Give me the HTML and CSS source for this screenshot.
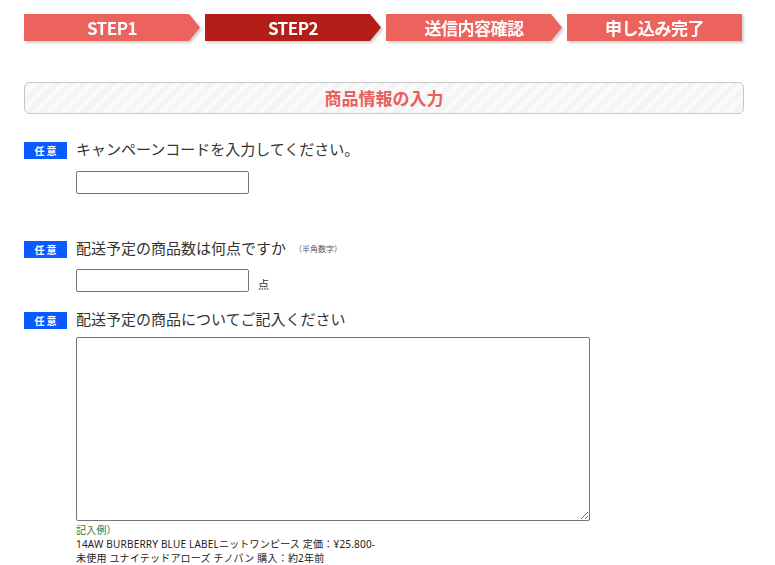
FILE: index.html
```html
<!DOCTYPE html>
<html lang="ja">
<head>
<meta charset="utf-8">
<link rel="stylesheet" href="styles.css">
</head>
<body>
<div class="page">
  <ol class="steps">
    <li class="step"><span class="step-shape">STEP1</span></li>
    <li class="step step-current"><span class="step-shape">STEP2</span></li>
    <li class="step"><span class="step-shape">送信内容確認</span></li>
    <li class="step step-last"><span class="step-shape">申し込み完了</span></li>
  </ol>

  <h2 class="section-title">商品情報の入力</h2>

  <div class="field field-first">
    <span class="badge">任意</span>
    <div class="field-body">
      <div class="label">キャンペーンコードを入力してください。</div>
      <input class="text-input" type="text">
    </div>
  </div>

  <div class="field field-second">
    <span class="badge">任意</span>
    <div class="field-body">
      <div class="label">配送予定の商品数は何点ですか<small class="note">（半角数字）</small></div>
      <div class="input-line">
        <input class="text-input" type="text"><span class="unit">点</span>
      </div>
    </div>
  </div>

  <div class="field field-third">
    <span class="badge">任意</span>
    <div class="field-body">
      <div class="label">配送予定の商品についてご記入ください</div>
      <textarea class="textarea"></textarea>
      <div class="example">
        <div class="example-head">記入例）</div>
        <div>14AW BURBERRY BLUE LABELニットワンピース 定価：¥25.800-</div>
        <div>未使用 ユナイテッドアローズ チノパン 購入：約2年前</div>
      </div>
    </div>
  </div>
</div>
</body>
</html>
```

FILE: styles.css
```css
* { box-sizing: border-box; }
html, body { margin: 0; padding: 0; background: #fff; }
body {
  font-family: "Noto Sans", "Noto Sans CJK JP", sans-serif;
  color: #333;
}
.page {
  width: 720px;
  margin-left: 24px;
  padding-top: 14px;
}

/* steps */
.steps {
  list-style: none;
  margin: 0;
  padding: 0;
  display: flex;
  gap: 5px;
  height: 30px;
}
.step {
  width: 176px;
  height: 27px;
  filter: drop-shadow(2px 2px 1px rgba(0, 0, 0, 0.18));
}
.step-last { width: 175px; }
.step-shape {
  display: flex;
  align-items: center;
  justify-content: center;
  width: 100%;
  height: 100%;
  background: #ec625c;
  color: #fff;
  font-family: "Noto Sans CJK JP", sans-serif;
  font-weight: 700;
  font-size: 17px;
  letter-spacing: -0.5px;
  line-height: 1;
  clip-path: polygon(0 0, calc(100% - 11px) 0, 100% 50%, calc(100% - 11px) 100%, 0 100%);
}
.step-current .step-shape { background: #b51e18; }
.step-last .step-shape { clip-path: none; }

/* section title */
.section-title {
  margin: 38px 0 0;
  height: 32px;
  border: 1px solid #c8c8c8;
  border-radius: 5px;
  background: repeating-linear-gradient(135deg, #f4f4f4 0 5px, #fafafa 5px 10px);
  color: #e8605b;
  font-family: "Noto Sans CJK JP", sans-serif;
  font-size: 17px;
  font-weight: 700;
  line-height: 29px;
  text-align: center;
}

/* fields */
.field {
  display: flex;
  gap: 9px;
}
.field-first { margin-top: 28px; }
.field-second { margin-top: 47px; }
.field-third { margin-top: 20px; }

.badge {
  flex: none;
  width: 43px;
  height: 17px;
  background: #0a5bff;
  color: #fff;
  font-family: "Noto Sans CJK JP", sans-serif;
  font-size: 10px;
  font-weight: 700;
  letter-spacing: 2px;
  line-height: 17px;
  text-align: center;
  padding-left: 2px;
}
.field-body { flex: 1; }
.label {
  font-family: "Noto Sans CJK JP", sans-serif;
  font-size: 15px;
  line-height: 18px;
  color: #333;
  margin-top: -2px;
}
.note {
  font-size: 8px;
  color: #555;
  margin-left: 8px;
  vertical-align: 2px;
}
.text-input {
  display: block;
  width: 173px;
  height: 23px;
  margin: 13px 0 0;
  border: 1px solid #767676;
  border-radius: 2px;
  padding: 1px 2px;
  font-size: 13px;
  background: #fff;
}
.field-second .text-input { margin-top: 0; }
.input-line {
  display: flex;
  align-items: center;
  margin-top: 11px;
}
.unit {
  font-family: "Noto Sans CJK JP", sans-serif;
  font-size: 11px;
  color: #333;
  margin-left: 9px;
  margin-top: 6px;
}
.textarea {
  display: block;
  width: 514px;
  height: 184px;
  margin: 9px 0 0;
  border: 1px solid #767676;
  border-radius: 2px;
  font-size: 13px;
  resize: both;
}
.example {
  margin-top: 2px;
  font-family: "Noto Sans", "Noto Sans CJK JP", sans-serif;
  font-size: 10px;
  line-height: 14px;
  letter-spacing: 0.2px;
  color: #222;
}
.example-head { color: #2c7a2c; }
```
